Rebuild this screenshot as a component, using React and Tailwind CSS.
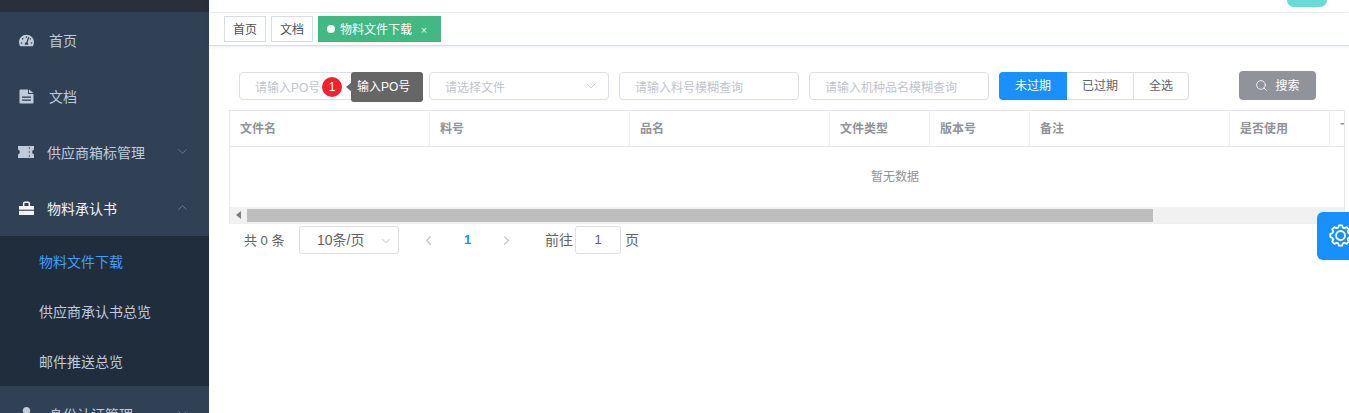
import React from "react";
import { ChevronDown, ChevronUp, ChevronLeft, ChevronRight, Search } from "lucide-react";
import { FaTachometerAlt, FaUser } from "react-icons/fa";

const font = { fontFamily: '"Liberation Sans", "Noto Sans CJK SC", sans-serif' };

function FileIcon() {
  return (
    <svg width="15" height="15" viewBox="0 0 15 15" fill="currentColor">
      <path d="M.5 1.500a1 1 0 0 1 1-1h7.500v4.500h5.500v8.500a1 1 0 0 1-1 1h-12a1 1 0 0 1-1-1z" />
      <path d="M10 .5l4.500 3.500h-4.500z" />
      <rect x="3" y="7.500" width="9" height="1.300" fill="#304156" />
      <rect x="3" y="10.500" width="9" height="1.300" fill="#304156" />
    </svg>
  );
}

function TicketIcon() {
  return (
    <svg width="16" height="12" viewBox="0 0 16 12" fill="currentColor" className="shrink-0">
      <path d="M0 0h16v3.500a2.600 2.600 0 0 0 0 5V12H0V8.500a2.600 2.600 0 0 0 0-5z" />
      <rect x="10.800" y="1" width="1" height="2.200" fill="#5f6f78" />
      <rect x="10.800" y="4.900" width="1" height="2.200" fill="#5f6f78" />
      <rect x="10.800" y="8.800" width="1" height="2.200" fill="#5f6f78" />
    </svg>
  );
}

function BriefcaseIcon() {
  return (
    <svg width="15" height="14" viewBox="0 0 15 14" fill="currentColor">
      <path d="M4.700 5V2.200a1 1 0 0 1 1-1h3.600a1 1 0 0 1 1 1V5" fill="none" stroke="currentColor" strokeWidth="1.500" />
      <path d="M0 5h15v3.700H0z" />
      <path d="M0 9.800h15V14H0z" />
    </svg>
  );
}

function gearPoints() {
  const pts = [];
  const teeth = 8;
  for (let i = 0; i < teeth; i++) {
    const a = (i / teeth) * Math.PI * 2;
    const step = (Math.PI * 2) / teeth;
    [[-0.36, 7.9], [-0.2, 9.9], [0.2, 9.9], [0.36, 7.9]].forEach(([f, r]) => {
      const t = a + f * step;
      pts.push(`${(11 + r * Math.cos(t)).toFixed(2)},${(11 + r * Math.sin(t)).toFixed(2)}`);
    });
  }
  return pts.join(" ");
}

function GearIcon() {
  return (
    <svg width="23" height="23" viewBox="0 0 22 22" fill="none" stroke="currentColor" strokeWidth="1.700" strokeLinejoin="round">
      <polygon points={gearPoints()} />
      <circle cx="11" cy="11" r="4.300" />
    </svg>
  );
}

function MenuItem({ icon, label, textClass = "ml-4", color = "text-[#bfcbd9]", chevron }) {
  return (
    <div className={`h-14 shrink-0 flex items-center pl-[18px] relative ${color}`}>
      <span className="w-4 flex justify-center text-[15px]">{icon}</span>
      <span className={`text-sm mt-[2px] ${textClass}`}>{label}</span>
      {chevron === "down" && <ChevronDown size={15} strokeWidth={1.2} className="absolute left-[175px] top-[20px] text-[#7d8a9a]" />}
      {chevron === "up" && <ChevronUp size={15} strokeWidth={1.2} className="absolute left-[175px] top-[20px] text-[#7d8a9a]" />}
    </div>
  );
}

function Sidebar() {
  return (
    <aside className="w-[209px] shrink-0 h-[413px] overflow-hidden bg-[#304156] flex flex-col">
      <div className="h-3 shrink-0 bg-[#2b2f3a]" />
      <MenuItem icon={<FaTachometerAlt />} label="首页" textClass="ml-[15px]" />
      <MenuItem icon={<FileIcon />} label="文档" textClass="ml-[15px]" />
      <MenuItem icon={<TicketIcon />} label="供应商箱标管理" textClass="ml-[13px]" chevron="down" />
      <MenuItem icon={<BriefcaseIcon />} label="物料承认书" textClass="ml-[13px]" color="text-[#f4f4f5]" chevron="up" />
      <div className="bg-[#1f2d3d] shrink-0 text-sm">
        <div className="h-[50px] flex items-center pl-[39px] pt-[2px] text-[#409eff]">物料文件下载</div>
        <div className="h-[50px] flex items-center pl-[39px] pt-[2px] text-[#bfcbd9]">供应商承认书总览</div>
        <div className="h-[50px] flex items-center pl-[39px] pt-[2px] text-[#bfcbd9]">邮件推送总览</div>
      </div>
      <MenuItem icon={<FaUser />} label="身份认证管理" textClass="ml-[15px]" chevron="down" />
    </aside>
  );
}

function Tag({ children }) {
  return (
    <div className="h-[26px] w-[42px] border border-[#d8dce5] bg-white text-xs text-[#495060] flex items-center justify-center pt-[2px]">
      {children}
    </div>
  );
}

function TagsBar() {
  return (
    <div className="h-[33px] shrink-0 flex items-start gap-[5px] pl-[15px] pt-[3px] bg-white border-b border-[#d8dce5] shadow-[0_1px_3px_rgba(0,0,0,0.08)]">
      <Tag>首页</Tag>
      <Tag>文档</Tag>
      <div className="h-[26px] w-[123px] bg-[#42b983] text-white text-xs flex items-center pl-[9px]">
        <span className="w-2 h-2 rounded-full bg-white mr-[5px]" />
        <span className="mt-[2px]">物料文件下载</span>
        <span className="ml-[9px] mt-[3px] text-[10px] leading-none text-[#e6f5ee]">×</span>
      </div>
    </div>
  );
}

function Field({ placeholder, chevron, children }) {
  return (
    <div className="w-[180px] h-7 relative shrink-0 border border-[#dcdfe6] rounded-[4px] bg-white flex items-center pl-[15px] text-xs text-[#c0c4cc]">
      <span className="mt-[4px]">{placeholder}</span>
      {chevron && <ChevronDown size={16} strokeWidth={1.2} className="absolute right-[9px] top-[5px] text-[#c0c4cc]" />}
      {children}
    </div>
  );
}

function FilterRow() {
  return (
    <div className="flex items-start pl-[30px] pt-[26px] h-[64px] shrink-0">
      <div className="flex gap-[10px]">
        <Field placeholder="请输入PO号">
          <span className="absolute left-[82px] top-[4px] w-5 h-5 rounded-full bg-[#f5222d] text-white text-xs flex items-center justify-center">1</span>
          <span className="absolute left-[106px] top-[9px] w-0 h-0 border-y-[5px] border-y-transparent border-r-[6px] border-r-[#666666]" />
          <span className="absolute left-[111px] top-[-1px] w-[72px] h-[30px] rounded-[3px] bg-[#666666] text-white text-xs flex items-center pl-[6px]">输入PO号</span>
        </Field>
        <Field placeholder="请选择文件" chevron />
        <Field placeholder="请输入料号模糊查询" />
        <Field placeholder="请输入机种品名模糊查询" />
      </div>
      <div className="ml-[10px] flex h-7 text-xs shrink-0">
        <div className="w-[68px] bg-[#1890ff] text-white rounded-l-[4px] flex items-center justify-center">未过期</div>
        <div className="w-[67px] border-y border-r border-[#dcdfe6] text-[#606266] flex items-center justify-center">已过期</div>
        <div className="w-[55px] border-y border-r border-[#dcdfe6] rounded-r-[4px] text-[#606266] flex items-center justify-center">全选</div>
      </div>
      <button className="ml-[50px] -mt-px w-[77px] h-[29px] bg-[#909399] text-white text-xs rounded-[4px] flex items-center justify-center gap-[7px]">
        <Search size={13} strokeWidth={1.5} />
        搜索
      </button>
    </div>
  );
}

const columns = [
  ["文件名", "w-[200px]"],
  ["料号", "w-[200px]"],
  ["品名", "w-[200px]"],
  ["文件类型", "w-[100px]"],
  ["版本号", "w-[100px]"],
  ["备注", "w-[200px]"],
  ["是否使用", "w-[100px]"],
  ["下载", "w-[230px]"],
];

function DataTable() {
  return (
    <div className="ml-5 w-[1116px] shrink-0 h-[114px] border-x border-t border-[#e4e7ed] border-b-[#ebeef5] border-b overflow-hidden">
      <div className="flex w-[1330px] h-9 border-b border-[#e4e7ed] text-xs font-bold text-[#909399]">
        {columns.map(([name, w]) => (
          <div key={name} className={`${w} shrink-0 border-r border-[#ebeef5] flex items-center pl-[10px]`}>{name}</div>
        ))}
      </div>
      <div className="w-[1330px] h-[60px] flex items-center justify-center text-xs text-[#909399]">暂无数据</div>
      <div className="h-4 bg-[#f1f1f1] flex items-center">
        <span className="w-[17px] flex justify-center">
          <span className="w-0 h-0 border-y-[4px] border-y-transparent border-r-[5px] border-r-[#7d7d7d]" />
        </span>
        <span className="w-[906px] h-[13px] bg-[#bebebe]" />
      </div>
    </div>
  );
}

function Pagination() {
  return (
    <div className="flex items-center h-7 mt-[2px] ml-[35px] text-[13px] text-[#606266] shrink-0">
      <span className="w-[55px] mt-[2px]">共 0 条</span>
      <div className="w-[100px] h-7 relative border border-[#dcdfe6] rounded-[3px] flex items-center pl-[17px] text-sm">
        10条/页
        <ChevronDown size={14} strokeWidth={1.3} className="absolute right-[5px] top-[7px] text-[#b4b8c0]" />
      </div>
      <ChevronLeft size={15} strokeWidth={2} className="ml-[22px] text-[#c0c4cc]" />
      <span className="ml-[28px] w-[8px] text-[#1890ff] font-bold">1</span>
      <ChevronRight size={15} strokeWidth={2} className="ml-[27px] text-[#c0c4cc]" />
      <span className="ml-[31px] text-sm">前往</span>
      <div className="ml-[2px] w-[46px] h-7 border border-[#dcdfe6] rounded-[3px] flex items-center justify-center">1</div>
      <span className="ml-[4px] text-sm">页</span>
    </div>
  );
}

export default function App() {
  return (
    <div style={font} className="w-[1349px] h-[413px] overflow-hidden bg-white flex relative">
      <Sidebar />
      <main className="flex-1 min-w-0 flex flex-col">
        <div className="h-3 shrink-0 bg-white shadow-[0_1px_3px_rgba(0,0,0,0.1)] flex justify-end pr-[22px]">
          <div className="w-10 h-[7px] bg-[#67dcd6] rounded-b-[10px]" />
        </div>
        <div className="h-px shrink-0" />
        <TagsBar />
        <FilterRow />
        <DataTable />
        <Pagination />
      </main>
      <div className="absolute left-[1317px] top-[212px] w-12 h-12 bg-[#1890ff] rounded-[6px] pl-[12px] pt-[12px] text-white">
        <GearIcon />
      </div>
    </div>
  );
}
